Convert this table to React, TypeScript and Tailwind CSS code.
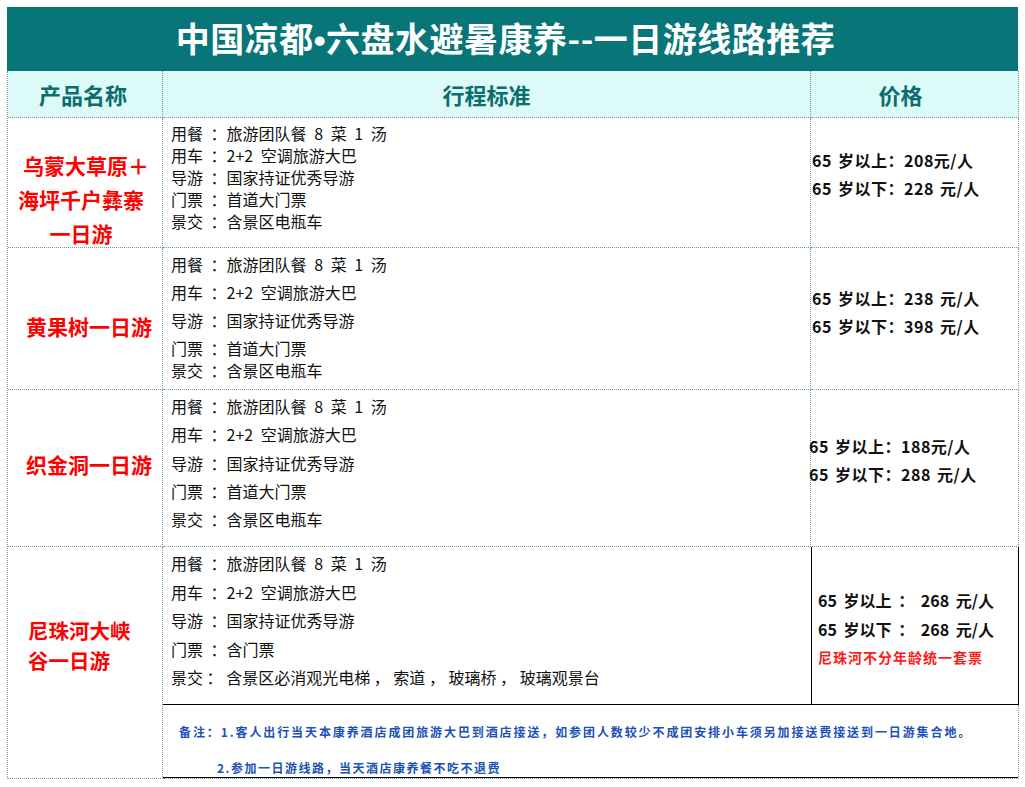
import React from 'react';

const font = { fontFamily: '"Noto Sans CJK SC", "Noto Sans", sans-serif' };

type Route = {
  name: React.ReactNode;
  lines: string[];
  lineCls: string;
  listCls: string;
  prices: string[];
  priceCls: string;
};

const standard = ['用餐 ：旅游团队餐 8 菜 1 汤', '用车 ：2+2 空调旅游大巴', '导游 ：国家持证优秀导游', '门票 ：首道大门票', '景交 ：含景区电瓶车'];

const routes: Route[] = [
  {
    name: (
      <div className="pt-[30px] pr-[8px] text-center leading-[34px]">
        <span className="pl-[10px]">乌蒙大草原＋</span>
        <br />
        海坪千户彝寨
        <br />
        一日游
      </div>
    ),
    lines: standard,
    lineCls: 'leading-[22px]',
    listCls: 'pt-[4px]',
    prices: ['65 岁以上：208元/人', '65 岁以下：228 元/人'],
    priceCls: 'pl-[1px] pb-[18px]',
  },
  {
    name: <div className="flex h-full items-center justify-center pt-[16px] pl-[8px]">黄果树一日游</div>,
    lines: standard,
    lineCls: 'leading-[28px] last:-mt-[6px]',
    listCls: 'pt-[2px]',
    prices: ['65 岁以上：238 元/人', '65 岁以下：398 元/人'],
    priceCls: 'pl-[1px] pb-[14px]',
  },
  {
    name: <div className="flex h-full items-center justify-center pb-[7px] pl-[8px]">织金洞一日游</div>,
    lines: standard,
    lineCls: 'leading-[28.3px]',
    listCls: 'pt-[2px]',
    prices: ['65 岁以上：188元/人', '65 岁以下：288 元/人'],
    priceCls: '-ml-[2px] pb-[16px]',
  },
];

function Cell({ className = '', children }: { className?: string; children?: React.ReactNode }) {
  return <div className={`border-r border-b border-dotted border-[#6f9f95] ${className}`}>{children}</div>;
}

export default function App() {
  return (
    <div className="min-h-screen bg-white pl-[7px] pt-[7px]" style={font}>
      <div className="w-[1011px]">
        {/* Title */}
        <div className="flex h-[64px] items-center justify-center bg-[#087678] pr-[14px]">
          <h1 className="text-[34px] font-bold tracking-[0.5px] text-white">
            中国凉都<span style={{ fontFamily: '"Liberation Sans", sans-serif' }}>•</span>六盘水避暑康养--一日游线路推荐
          </h1>
        </div>

        <div className="grid grid-cols-[155px_648px_208px] grid-rows-[47px_130px_142px_157px_158px_74px] border-l border-dotted border-[#6f9f95]">
          {/* Header */}
          <Cell className="flex items-center justify-center bg-[#dcfaf7] pr-[4px] text-[22px] font-bold text-[#0b6d6e]">产品名称</Cell>
          <Cell className="flex items-center justify-center bg-[#dcfaf7] text-[22px] font-bold text-[#0b6d6e]">行程标准</Cell>
          <Cell className="flex items-center justify-center bg-[#dcfaf7] pr-[28px] text-[22px] font-bold text-[#0b6d6e]">价格</Cell>

          {routes.map((r, i) => (
            <React.Fragment key={i}>
              <Cell className="text-[21px] font-bold text-[#ff0000]">{r.name}</Cell>
              <Cell className={`flex flex-col pl-[8px] text-[16px] text-[#111] [word-spacing:4px] ${r.listCls}`}>
                {r.lines.map((l) => (
                  <span key={l} className={r.lineCls}>{l}</span>
                ))}
              </Cell>
              <Cell className={`flex flex-col justify-center text-[16px] font-bold leading-[28px] tracking-[0.5px] text-[#111] [word-spacing:2px] ${r.priceCls}`}>
                {r.prices.map((p) => (
                  <span key={p} className="whitespace-nowrap">{p}</span>
                ))}
              </Cell>
            </React.Fragment>
          ))}

          {/* Row 4: merged name cell spans into the notes row */}
          <Cell className="row-span-2 pl-[20px] pt-[68px] text-[20.5px] font-bold leading-[30px] text-[#ff0000]">
            <div>
              尼珠河大峡
              <br />
              谷一日游
            </div>
          </Cell>
          <div className="flex flex-col border-b border-black pl-[8px] pt-[2px] text-[16px] leading-[28.5px] text-[#111]">
            <span className="[word-spacing:4px]">用餐 ：旅游团队餐 8 菜 1 汤</span>
            <span className="[word-spacing:4px]">用车 ：2+2 空调旅游大巴</span>
            <span className="[word-spacing:4px]">导游 ：国家持证优秀导游</span>
            <span className="[word-spacing:4px]">门票 ：含门票</span>
            <span>景交 ： 含景区必消观光电梯 ， 索道 ， 玻璃桥 ， 玻璃观景台</span>
          </div>
          <div className="flex flex-col justify-center border-r border-b border-l border-black pl-[6px] pt-[4px] text-[16px] font-bold leading-[29px] text-[#111] [word-spacing:3px]">
            <span>65 岁以上 ： 268 元/人</span>
            <span>65 岁以下 ： 268 元/人</span>
            <span className="text-[14px] leading-[26px] tracking-[1px] text-[#ff1a1a]">尼珠河不分年龄统一套票</span>
          </div>

          {/* Notes */}
          <div className="col-span-2 flex flex-col border-r border-b border-dotted border-[#6f9f95] text-[12px] font-bold tracking-[1.9px] text-[#1c52b6]">
            <div className="flex flex-1 flex-col border-b border-solid border-black">
              <span className="pl-[16px] pt-[18px] leading-[18px]">备注：1.客人出行当天本康养酒店成团旅游大巴到酒店接送，如参团人数较少不成团安排小车须另加接送费接送到一日游集合地。</span>
              <span className="pl-[54px] pt-[18px] leading-[18px] tracking-[1.5px]">2.参加一日游线路，当天酒店康养餐不吃不退费</span>
            </div>
          </div>
        </div>
      </div>
    </div>
  );
}
